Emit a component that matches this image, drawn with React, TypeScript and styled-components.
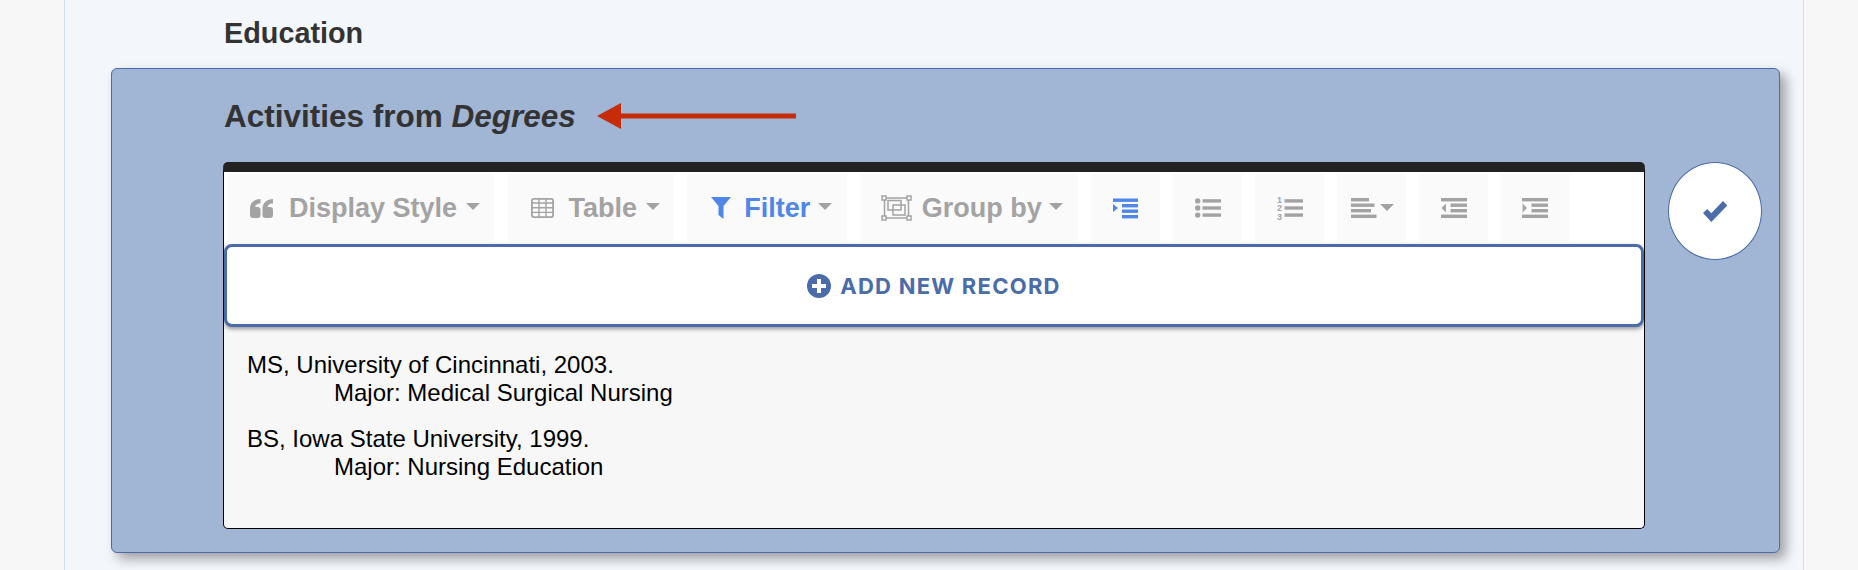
import React from "react";
import styled, { createGlobalStyle } from "styled-components";

const Global = createGlobalStyle`
  html, body { margin: 0; padding: 0; background: #f7f7f7; overflow: hidden; }
  body { font-family: "Liberation Sans", Arial, sans-serif; }
`;

const Column = styled.main`
  box-sizing: border-box;
  width: 1740px;
  height: 570px;
  margin-left: 64px;
  padding-top: 18px;
  background: #f3f6fb;
  border-left: 1px solid #d3deee;
  border-right: 1px solid #d3deee;
`;

const SectionHeading = styled.h2`
  margin: 0 0 20px 159px;
  font-size: 28.8px;
  line-height: 30px;
  font-weight: 700;
  color: #333;
`;

const Panel = styled.section`
  box-sizing: border-box;
  width: 1669px;
  height: 485px;
  margin-left: 46px;
  padding: 32px 0 0 111px;
  background: #a1b5d4;
  border: 1px solid #4a6ca8;
  border-radius: 6px;
  box-shadow: 6px 6px 12px rgba(0, 0, 0, 0.35);
`;

const TitleRow = styled.div`
  display: flex;
  align-items: center;
  gap: 21px;
  height: 30px;
  margin-bottom: 31px;
  padding-left: 1px;
`;

const Title = styled.h3`
  margin: 0;
  font-size: 31.5px;
  line-height: 30px;
  font-weight: 700;
  color: #333;
  em { font-style: italic; }
`;

const Row = styled.div`
  display: flex;
  align-items: flex-start;
  gap: 23px;
`;

const Editor = styled.div`
  box-sizing: border-box;
  width: 1422px;
  height: 367px;
  background: #f7f7f7;
  border: 1px solid #000;
  border-top: 10px solid #222;
  border-radius: 5px;
  overflow: hidden;
`;

const Toolbar = styled.div`
  display: flex;
  gap: 13.6px;
  padding: 2px 0 2px 4px;
  background: #fff;
`;

const ToolButton = styled.button<{ $w: number; $active?: boolean; $left?: number }>`
  display: flex;
  align-items: center;
  justify-content: ${(p) => (p.$left ? "flex-start" : "center")};
  box-sizing: border-box;
  width: ${(p) => p.$w}px;
  height: 68px;
  padding: 0 0 0 ${(p) => p.$left ?? 0}px;
  border: none;
  background: #fafafa;
  color: ${(p) => (p.$active ? "#4f86e8" : "#a3a3a3")};
  font-family: "Liberation Sans", Arial, sans-serif;
  font-size: 27px;
  font-weight: 700;
  svg { display: block; flex: none; }
`;

const Label = styled.span<{ $before: number; $after: number }>`
  margin: 0 ${(p) => p.$after}px 0 ${(p) => p.$before}px;
  line-height: 30px;
`;

const Caret = styled.i`
  flex: none;
  width: 0;
  height: 0;
  margin-top: -4px;
  border-left: 7px solid transparent;
  border-right: 7px solid transparent;
  border-top: 7px solid #a3a3a3;
`;

const AddButton = styled.button`
  display: flex;
  align-items: center;
  justify-content: center;
  gap: 9px;
  box-sizing: border-box;
  width: 1420px;
  height: 83px;
  margin: 0;
  background: #fff;
  border: 3px solid #4a6ca8;
  border-radius: 8px;
  box-shadow: 0 2px 4px rgba(0, 0, 0, 0.4);
  color: #4a6ca8;
  font-family: Inter, "Liberation Sans", sans-serif;
  font-size: 22px;
  font-weight: 700;
  letter-spacing: 1.25px;
`;

const Content = styled.div`
  padding: 24px 24px 0 23px;
  color: #000;
  font-size: 24px;
  line-height: 28px;
`;

const Entry = styled.p`
  margin: 0 0 18px;
`;

const Major = styled.span`
  display: block;
  margin-left: 87px;
`;

const SaveButton = styled.button`
  display: flex;
  align-items: center;
  justify-content: center;
  box-sizing: border-box;
  width: 94px;
  height: 98px;
  padding: 0;
  background: #fff;
  border: 1px solid #4a6ca8;
  border-radius: 50%;
`;

const Bars = ({ bars }: { bars: [number, number, number][] }) => (
  <>
    {bars.map(([x, y, w], i) => (
      <rect key={i} x={x} y={y} width={w} height={3.4} />
    ))}
  </>
);

const Quote = () => (
  <svg width="23" height="19" viewBox="0 0 23 19" fill="#a3a3a3">
    <path d="M10.5 0C4.5 0 0 4 0 9.5V16a3 3 0 0 0 3 3h4.5a3 3 0 0 0 3-3v-5a3 3 0 0 0-3-3H5.2C5.2 6 7.5 4.5 10.5 4.5Z" />
    <path d="M23 0C17 0 12.5 4 12.5 9.5V16a3 3 0 0 0 3 3H20a3 3 0 0 0 3-3v-5a3 3 0 0 0-3-3h-2.3C17.7 6 20 4.5 23 4.5Z" />
  </svg>
);

const TableIcon = () => (
  <svg width="23" height="20" viewBox="0 0 23 20">
    <rect x="0.9" y="0.9" width="21.2" height="18.2" rx="2" fill="#fafafa" stroke="#a3a3a3" strokeWidth="1.8" />
    <path d="M8 1v18M15 1v18M1 5h21M1 9.7h21M1 14.4h21" stroke="#a3a3a3" strokeWidth="1.4" fill="none" />
  </svg>
);

const FilterIcon = () => (
  <svg width="20" height="22" viewBox="0 0 20 22" fill="#4f86e8">
    <path d="M0 0H20L12.5 9V22L7.5 18V9Z" />
  </svg>
);

const GroupIcon = () => (
  <svg width="31" height="26" viewBox="0 0 31 26" fill="none" stroke="#a3a3a3" strokeWidth="1.5">
    <rect x="3.5" y="3" width="24" height="20" />
    <rect x="7" y="5.5" width="13" height="9.5" />
    <rect x="12" y="10" width="12" height="10" />
    <g fill="#fafafa" strokeWidth="1.5">
      <rect x="1" y="1" width="4" height="4" />
      <rect x="26" y="1" width="4" height="4" />
      <rect x="1" y="21" width="4" height="4" />
      <rect x="26" y="21" width="4" height="4" />
    </g>
  </svg>
);

const IndentActive = () => (
  <svg width="25" height="21" viewBox="0 0 25 21" fill="#4f86e8">
    <path d="M0 6V14L5 10Z" />
    <Bars bars={[[0, 0.5, 25], [9, 6, 16], [9, 11.5, 16], [9, 17, 16]]} />
  </svg>
);

const BulletIcon = () => (
  <svg width="26" height="20" viewBox="0 0 26 20" fill="#a3a3a3">
    <circle cx="2.7" cy="2.9" r="2.7" />
    <circle cx="2.7" cy="10" r="2.7" />
    <circle cx="2.7" cy="17.1" r="2.7" />
    <Bars bars={[[7.5, 1.2, 18.5], [7.5, 8.3, 18.5], [7.5, 15.4, 18.5]]} />
  </svg>
);

const NumberIcon = () => (
  <svg width="26" height="26" viewBox="0 0 26 26" fill="#a3a3a3">
    <g fontFamily="Liberation Sans, sans-serif" fontSize="9" fontWeight="700">
      <text x="0" y="7.5">1</text>
      <text x="0" y="16">2</text>
      <text x="0" y="24.5">3</text>
    </g>
    <Bars bars={[[7.5, 4.2, 18.5], [7.5, 11.3, 18.5], [7.5, 18.4, 18.5]]} />
  </svg>
);

const AlignIcon = () => (
  <svg width="45" height="20" viewBox="-2 0 45 20" fill="#a3a3a3">
    <Bars bars={[[0, 0, 18], [0, 5.5, 23.5], [0, 11, 20], [0, 16.6, 25.5]]} />
    <path d="M29 6H43L36 13Z" />
  </svg>
);

const OutdentIcon = () => (
  <svg width="26" height="20" viewBox="0 0 26 20" fill="#a3a3a3">
    <path d="M5 5.6V14.4L0.5 10Z" />
    <Bars bars={[[0, 0, 26], [9.5, 5.5, 16.5], [9.5, 11, 16.5], [0, 16.6, 26]]} />
  </svg>
);

const IndentIcon = () => (
  <svg width="26" height="20" viewBox="0 0 26 20" fill="#a3a3a3">
    <path d="M0.5 5.6V14.4L5 10Z" />
    <Bars bars={[[0, 0, 26], [9.5, 5.5, 16.5], [9.5, 11, 16.5], [0, 16.6, 26]]} />
  </svg>
);

const PlusCircle = () => (
  <svg width="24" height="24" viewBox="0 0 24 24">
    <circle cx="12" cy="12" r="12" fill="#4a6ca8" />
    <path d="M10 5h4v5h5v4h-5v5h-4v-5H5v-4h5Z" fill="#fff" />
  </svg>
);

const Check = () => (
  <svg width="25" height="21" viewBox="0 0 25 21" fill="#4a6ca8">
    <path d="M0 12L4.3 8L8.3 12.3L20 0L24.3 4.6L8.3 21Z" />
  </svg>
);

const Arrow = () => (
  <svg width="199" height="26" viewBox="0 0 199 26" fill="#c62c07">
    <path d="M0 13L24 0V10.5H199V15.5H24V26Z" />
  </svg>
);

export default function App() {
  return (
    <>
      <Global />
      <Column>
        <SectionHeading>Education</SectionHeading>
        <Panel>
          <TitleRow>
            <Title>
              Activities from <em>Degrees</em>
            </Title>
            <Arrow />
          </TitleRow>
          <Row>
            <Editor>
              <Toolbar>
                <ToolButton $w={266} $left={22}>
                  <Quote />
                  <Label $before={16} $after={9}>Display Style</Label>
                  <Caret />
                </ToolButton>
                <ToolButton $w={166} $left={23}>
                  <TableIcon />
                  <Label $before={15} $after={9}>Table</Label>
                  <Caret />
                </ToolButton>
                <ToolButton $w={160} $active $left={24}>
                  <FilterIcon />
                  <Label $before={13} $after={8}>Filter</Label>
                  <Caret />
                </ToolButton>
                <ToolButton $w={217} $left={20}>
                  <GroupIcon />
                  <Label $before={10} $after={7}>Group by</Label>
                  <Caret />
                </ToolButton>
                <ToolButton $w={68.4} $active>
                  <IndentActive />
                </ToolButton>
                <ToolButton $w={68.4}>
                  <BulletIcon />
                </ToolButton>
                <ToolButton $w={68.4}>
                  <NumberIcon />
                </ToolButton>
                <ToolButton $w={68.4}>
                  <AlignIcon />
                </ToolButton>
                <ToolButton $w={68.4}>
                  <OutdentIcon />
                </ToolButton>
                <ToolButton $w={68.4}>
                  <IndentIcon />
                </ToolButton>
              </Toolbar>
              <AddButton>
                <PlusCircle />
                ADD NEW RECORD
              </AddButton>
              <Content>
                <Entry>
                  MS, University of Cincinnati, 2003.
                  <Major>Major: Medical Surgical Nursing</Major>
                </Entry>
                <Entry>
                  BS, Iowa State University, 1999.
                  <Major>Major: Nursing Education</Major>
                </Entry>
              </Content>
            </Editor>
            <SaveButton>
              <Check />
            </SaveButton>
          </Row>
        </Panel>
      </Column>
    </>
  );
}
